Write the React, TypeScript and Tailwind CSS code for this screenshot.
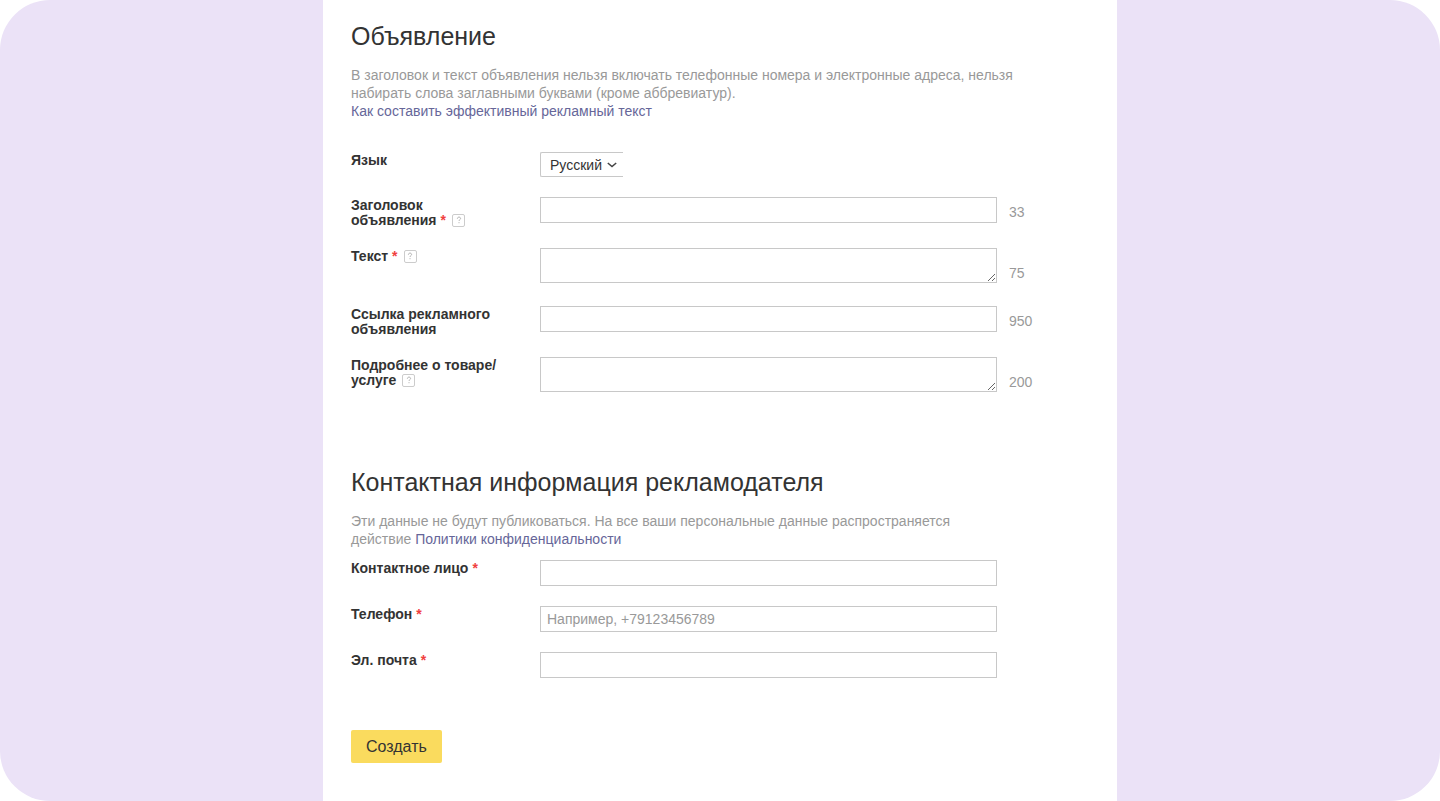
import type { ReactNode } from "react";

type FieldProps = {
  id: string;
  label: string;
  required?: boolean;
  hint?: string;
  limit?: number;
  multiline?: boolean;
  type?: string;
  placeholder?: string;
};

type RowProps = {
  id: string;
  label: string;
  required?: boolean;
  hint?: string;
  children: ReactNode;
};

const adFields: FieldProps[] = [
  {
    id: "title",
    label: "Заголовок объявления",
    required: true,
    hint: "Заголовок объявления",
    limit: 33,
  },
  {
    id: "text",
    label: "Текст",
    required: true,
    hint: "Текст",
    limit: 75,
    multiline: true,
  },
  { id: "link", label: "Ссылка рекламного объявления", limit: 950 },
  {
    id: "details",
    label: "Подробнее о товаре/услуге",
    hint: "Подробнее о товаре/услуге",
    limit: 200,
    multiline: true,
  },
];

const contactFields: FieldProps[] = [
  { id: "person", label: "Контактное лицо", required: true },
  {
    id: "phone",
    label: "Телефон",
    required: true,
    type: "tel",
    placeholder: "Например, +79123456789",
  },
  { id: "email", label: "Эл. почта", required: true, type: "email" },
];

function HintButton({ label }: { label: string }) {
  return (
    <button
      type="button"
      aria-label={label}
      className="ml-1.5 inline-flex h-[13px] w-[13px] items-center justify-center rounded-xs border border-[#ccc] align-[-1px] text-[#b0b0b0]"
    >
      <svg viewBox="0 0 12 12" className="h-3 w-3 shrink-0" fill="none" stroke="currentColor">
        <path d="M4.4 4.7c0-1 .7-1.6 1.6-1.6s1.6.6 1.6 1.4c0 1.1-1.6 1.2-1.6 2.5" />
        <path d="M6 8.2v1" />
      </svg>
    </button>
  );
}

function Row({ id, label, required, hint, children }: RowProps) {
  // a slash is an allowed break point in long labels
  const [head, tail] = label.split("/");

  return (
    <div className="flex flex-col sm:flex-row">
      <div className="w-[189px] shrink-0 pt-px pr-10 text-sm leading-[15px] font-bold text-[#333]">
        <label htmlFor={id}>
          {head}
          {tail && (
            <>
              /<wbr />
              {tail}
            </>
          )}
        </label>
        {required && <span className="ml-1 text-[#f04040]">*</span>}
        {hint && <HintButton label={hint} />}
      </div>
      {children}
    </div>
  );
}

function Field({ id, label, required, hint, limit, multiline, type = "text", placeholder }: FieldProps) {
  const box =
    "block w-full min-w-0 max-w-[457px] border border-[#c8c8c8] bg-white px-1.5 text-sm text-[#333] placeholder:text-[#999]";

  return (
    <Row id={id} label={label} required={required} hint={hint}>
      <div className={multiline ? "flex flex-1 items-end pb-[3px]" : "flex flex-1 items-start"}>
        {multiline ? (
          <textarea id={id} required={required} className={`${box} h-[35px] resize overflow-hidden`} />
        ) : (
          <input
            id={id}
            type={type}
            required={required}
            placeholder={placeholder}
            className={`${box} h-[26px]`}
          />
        )}
        {limit && (
          <span className="ml-3 pt-[5px] text-sm leading-5 text-[#999]">{limit}</span>
        )}
      </div>
    </Row>
  );
}

export default function App() {
  return (
    <div className="min-h-screen rounded-[50px] bg-[#ebe2f7] font-['Liberation_Sans',Arial,sans-serif]">
      <form className="mx-auto min-h-screen max-w-[794px] bg-white px-7 pt-5 pb-9">
        {/* Ad section */}
        <section>
          <h2 className="text-[25px] leading-8 text-[#333]">Объявление</h2>
          <p className="mt-3.5 max-w-[680px] text-sm leading-[18px] text-[#999]">
            В заголовок и текст объявления нельзя включать телефонные номера и
            электронные адреса, нельзя набирать слова заглавными буквами (кроме
            аббревиатур).
            <br />
            <a href="#help" className="text-[#669]">
              Как составить эффективный рекламный текст
            </a>
          </p>

          <div className="mt-8 flex flex-col gap-5">
            <Row id="language" label="Язык">
              <div className="relative">
                <select
                  id="language"
                  className="block h-[25px] w-[83px] appearance-none rounded-l-xs border border-r-0 border-[#c8c8c8] bg-white pl-[9px] text-sm text-[#333]"
                >
                  <option>Русский</option>
                </select>
                <svg
                  viewBox="0 0 10 6"
                  className="pointer-events-none absolute top-2.5 left-[67px] h-1.5 w-2.5"
                  fill="none"
                  stroke="#444"
                  strokeWidth="1.5"
                >
                  <path d="M.8 1 5 4.6 9.2 1" />
                </svg>
              </div>
            </Row>
            {adFields.map((field) => (
              <Field key={field.id} {...field} />
            ))}
          </div>
        </section>

        {/* Contact section */}
        <section className="mt-[71px]">
          <h2 className="text-[25px] leading-8 text-[#333]">
            Контактная информация рекламодателя
          </h2>
          <p className="mt-3.5 max-w-[620px] text-sm leading-[18px] text-[#999]">
            Эти данные не будут публиковаться. На все ваши персональные данные
            распространяется действие{" "}
            <a href="#privacy" className="text-[#669]">
              Политики конфиденциальности
            </a>
          </p>

          <div className="mt-3 flex flex-col gap-5">
            {contactFields.map((field) => (
              <Field key={field.id} {...field} />
            ))}
          </div>
        </section>

        <button
          type="submit"
          className="mt-[52px] h-[33px] rounded-xs bg-[#fadb5e] px-[15px] text-base text-[#333]"
        >
          Создать
        </button>
      </form>
    </div>
  );
}
